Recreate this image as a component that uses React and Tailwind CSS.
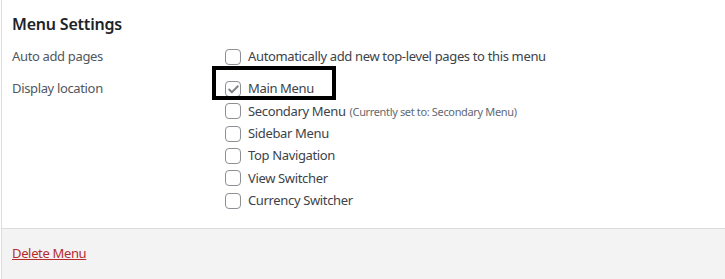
import { Check } from "lucide-react";

const locations = [
  { label: "Main Menu", checked: true },
  { label: "Secondary Menu", note: "(Currently set to: Secondary Menu)" },
  { label: "Sidebar Menu" },
  { label: "Top Navigation" },
  { label: "View Switcher" },
  { label: "Currency Switcher" },
];

function Box({ checked }) {
  return (
    <span className="flex h-4 w-4 shrink-0 items-center justify-center rounded-[4px] border border-[#8c8f94] bg-white">
      {checked && <Check className="h-[13px] w-[13px] text-[#7e8187]" strokeWidth={3.5} />}
    </span>
  );
}

export default function App() {
  return (
    <div
      className="h-[279px] w-[725px] overflow-hidden bg-white text-[13px] text-[#3c434a]"
      style={{ fontFamily: '"Noto Sans", "Open Sans", sans-serif' }}
    >
      <div className="ml-px flex h-full flex-col border-l border-[#dcdcde]">
        <div className="h-[228px] px-[10px]">
          <h3 className="pt-[12px] text-[16px] font-semibold leading-6 tracking-[-0.2px] text-[#1d2327]">
            Menu Settings
          </h3>
          <div className="mt-[10px] flex h-[22px] items-center">
            <div className="w-[213px] tracking-[-0.35px] text-[#50575e]">Auto add pages</div>
            <label className="flex items-center gap-[7px] tracking-[-0.35px]">
              <Box />
              Automatically add new top-level pages to this menu
            </label>
          </div>
          <div className="mt-[10px] flex">
            <div className="flex h-[22px] w-[213px] items-center tracking-[-0.35px] text-[#50575e]">
              Display location
            </div>
            <div className="relative flex flex-col">
              <div className="pointer-events-none absolute left-[-13px] top-[-12px] h-[34px] w-[124px] border-[4px] border-black" />
              {locations.map((l) => (
                <label
                  key={l.label}
                  className="flex h-[22.3px] items-center gap-[7px] tracking-[-0.35px]"
                >
                  <Box checked={l.checked} />
                  <span>
                    {l.label}
                    {l.note && (
                      <span className="ml-1 text-[11px] text-[#646970]">{l.note}</span>
                    )}
                  </span>
                </label>
              ))}
            </div>
          </div>
        </div>
        <div className="flex flex-1 items-center border-t border-[#dcdcde] bg-[#f3f3f3] px-[10px]">
          <a href="#" className="tracking-[-0.35px] text-[#b32d2e] underline">
            Delete Menu
          </a>
        </div>
      </div>
    </div>
  );
}
